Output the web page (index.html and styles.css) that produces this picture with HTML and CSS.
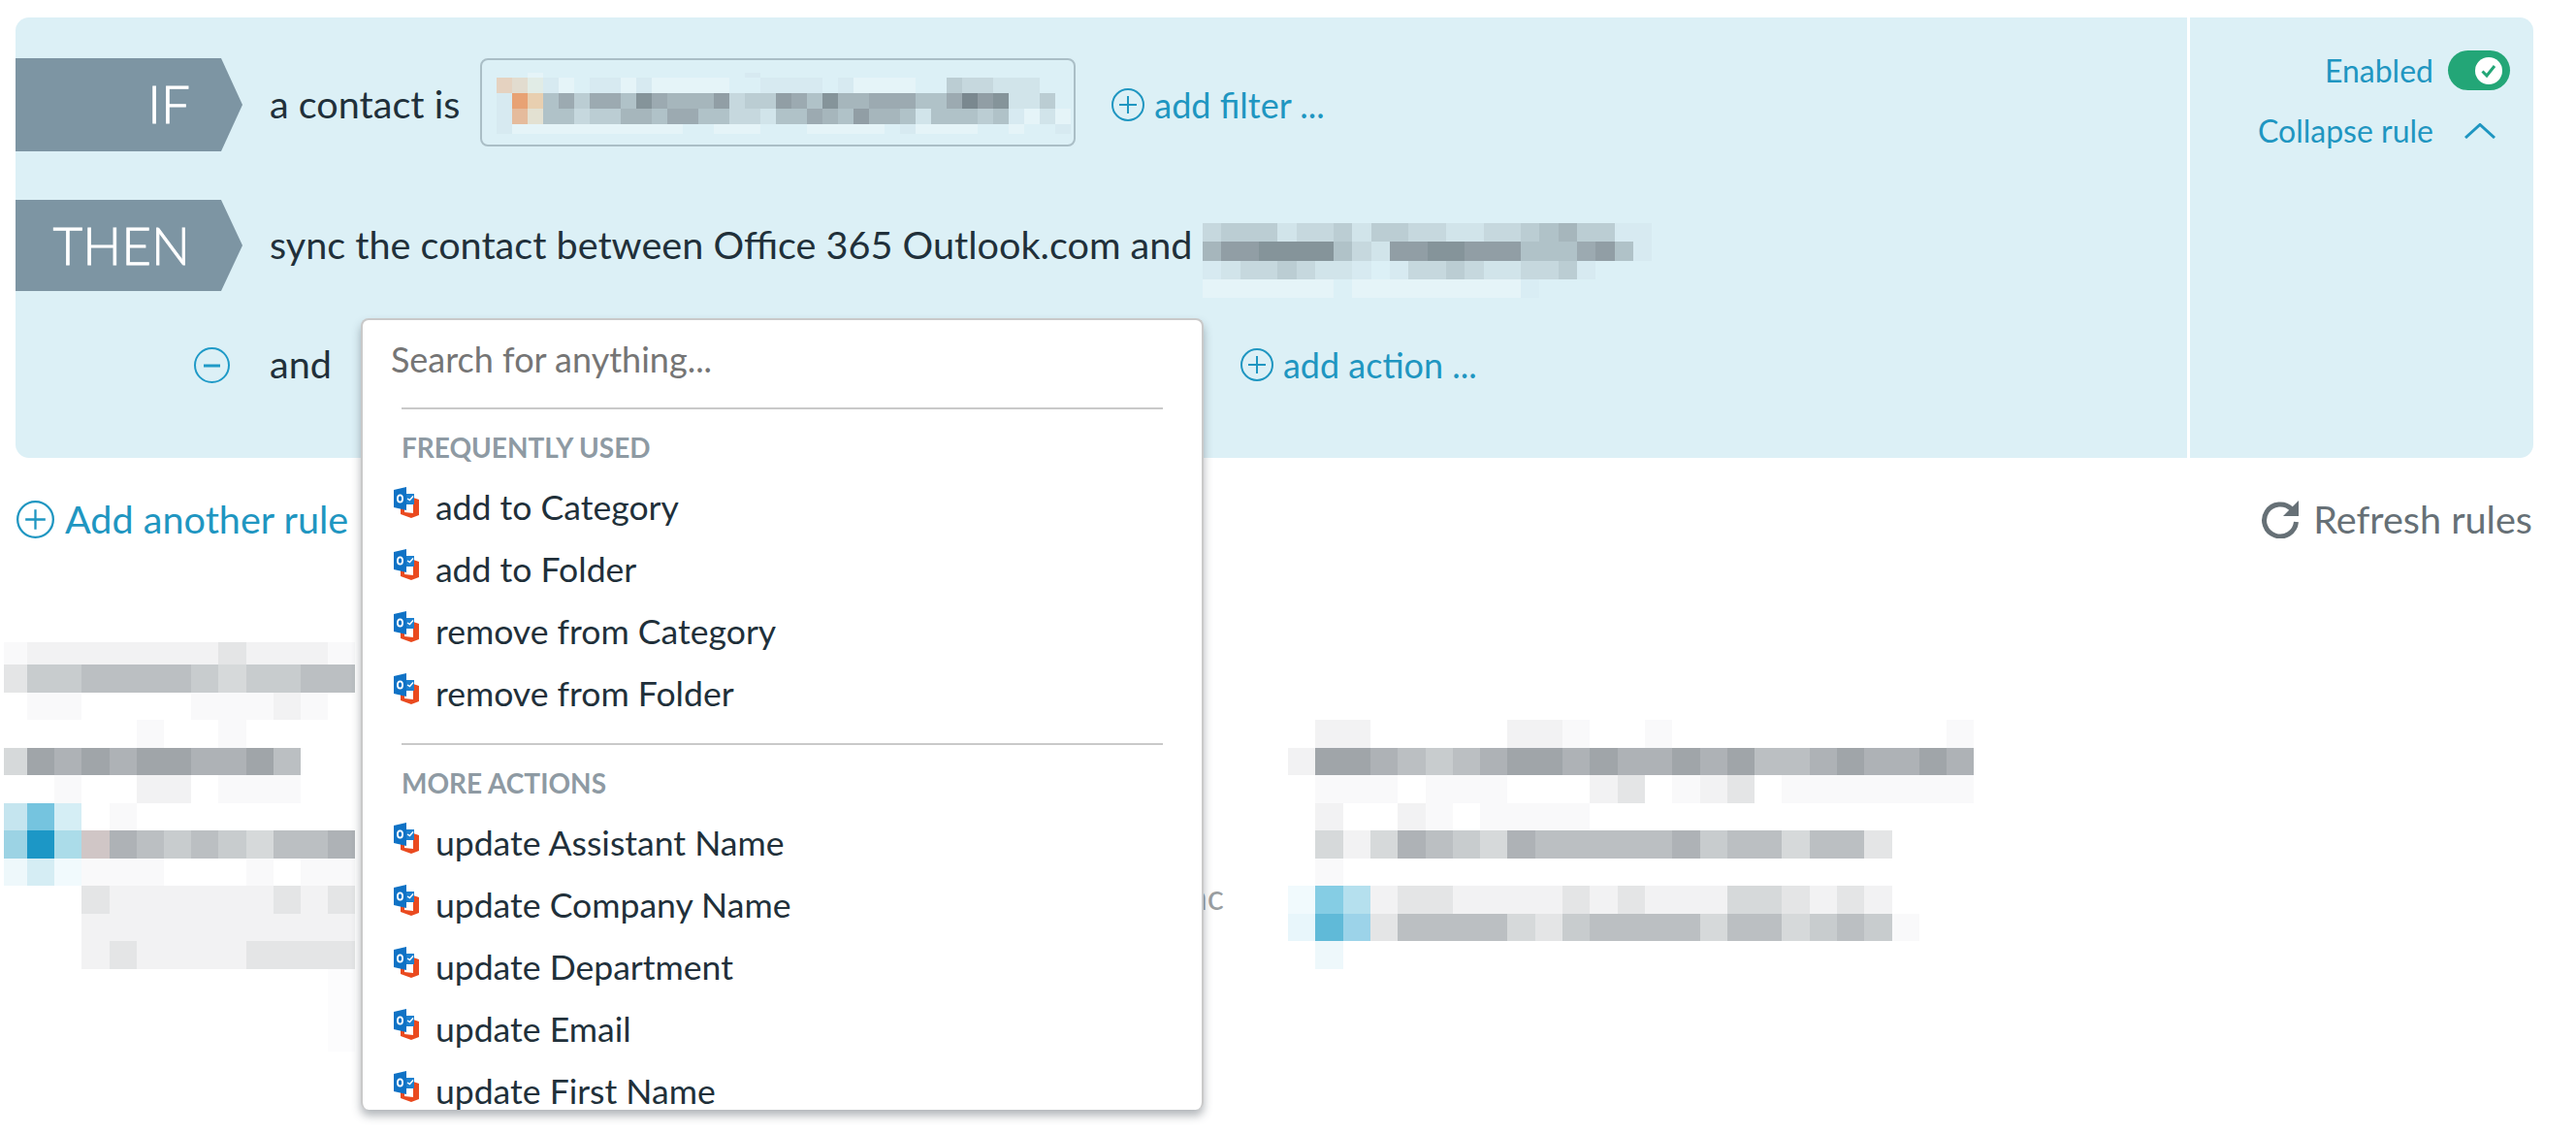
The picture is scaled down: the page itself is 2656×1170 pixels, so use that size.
FILE: index.html
```html
<!DOCTYPE html>
<html lang="en">
<head>
<meta charset="utf-8">
<title>Rules</title>
<link rel="stylesheet" href="styles.css">
</head>
<body>
<svg class="defs" width="0" height="0" aria-hidden="true">
  <symbol id="outlook" viewBox="0 0 26 32">
    <path d="M7 15 20 11 26 13V29L18 32 7 28Z" fill="#ea4a1f"/>
    <path d="M11 18 20 16V27L11 26Z" fill="#fff"/>
    <path d="M12 7H21V18H12Z" fill="#1d80cf"/>
    <path d="M14 12 16.5 13.5 20 9.5" fill="none" stroke="#fff" stroke-width="1.4"/>
    <path d="M0 3 13 0V24L0 21Z" fill="#0f72c5"/>
    <ellipse cx="6.5" cy="12" rx="2.6" ry="3.6" fill="none" stroke="#fff" stroke-width="1.8"/>
  </symbol>
  <symbol id="plus" viewBox="0 0 34 34">
    <circle cx="17" cy="17" r="16" fill="none" stroke="currentColor" stroke-width="2"/>
    <path d="M8 17H26M17 8V26" fill="none" stroke="currentColor" stroke-width="2"/>
  </symbol>
</svg>

<div class="page">
  <section class="panel">
    <div class="rule-main">
      <div class="rule-row rule-if">
        <div class="tag">IF</div>
        <span class="rule-text">a contact is</span>
        <div class="filter-box">
          <div class="mosaic" data-w="16" data-h="16" data-fh="5" data-lh="10" data-rows="..w.............-.....................|ABC-w.--w-wwwww..----.-wwww..322111..|-OT463664865557233764855666446978113.|-PQ442335546644221446547554144434-w1w|-wwwwwwwwwww..www...wwwww.-wwww..w..-"></div>
        </div>
        <a class="link add-filter"><svg class="ico-34"><use href="#plus"/></svg>add filter ...</a>
      </div>
      <div class="rule-row rule-then">
        <div class="tag tag-then">THEN</div>
        <span class="rule-text">sync the contact between Office 365 Outlook.com and</span>
        <div class="mosaic sync-target" data-w="19.3" data-h="19.3" data-rows="2333122313322112234533--|57788884217788777444674-|-1223211-.-223211223-...|wwwwwww.wwwwwwwww,......"></div>
      </div>
      <div class="rule-row rule-and">
        <svg class="minus" viewBox="0 0 37 37"><circle cx="18.5" cy="18.5" r="17.5" fill="none" stroke="#1f9ac7" stroke-width="2"/><path d="M10 19H27" stroke="#1f9ac7" stroke-width="3"/></svg>
        <span class="rule-text">and</span>
        <div class="select-slot">
          <div class="popup">
            <div class="search">Search for anything...</div>
            <div class="sep"></div>
            <div class="group-label">FREQUENTLY USED</div>
            <ul class="items">
              <li><svg class="app"><use href="#outlook"/></svg>add to Category</li>
              <li><svg class="app"><use href="#outlook"/></svg>add to Folder</li>
              <li><svg class="app"><use href="#outlook"/></svg>remove from Category</li>
              <li><svg class="app"><use href="#outlook"/></svg>remove from Folder</li>
            </ul>
            <div class="sep sep-2"></div>
            <div class="group-label">MORE ACTIONS</div>
            <ul class="items">
              <li><svg class="app"><use href="#outlook"/></svg>update Assistant Name</li>
              <li><svg class="app"><use href="#outlook"/></svg>update Company Name</li>
              <li><svg class="app"><use href="#outlook"/></svg>update Department</li>
              <li><svg class="app"><use href="#outlook"/></svg>update Email</li>
              <li><svg class="app"><use href="#outlook"/></svg>update First Name</li>
            </ul>
          </div>
        </div>
        <a class="link add-action"><svg class="ico-34"><use href="#plus"/></svg>add action ...</a>
      </div>
    </div>
    <aside class="rule-side">
      <div class="side-line">
        <span class="link side-link">Enabled</span>
        <span class="toggle"><span class="knob"><svg viewBox="0 0 28 28" width="28" height="28"><path d="M7.5 14.5 12 19 20 9" fill="none" stroke="#23a677" stroke-width="3"/></svg></span></span>
      </div>
      <div class="side-line side-collapse">
        <span class="link side-link">Collapse rule</span>
        <svg class="chev" viewBox="0 0 32 16"><path d="M1 15 16 1.5 31 15" fill="none" stroke="#1f96c1" stroke-width="3"/></svg>
      </div>
    </aside>
  </section>

  <div class="toolbar">
    <a class="link add-rule"><svg class="ico-39"><use href="#plus"/></svg>Add another rule</a>
    <a class="refresh">
      <svg class="ico-refresh" viewBox="0 0 40 40"><path d="M32 10A16.5 16.5 0 1 0 36.5 23" fill="none" stroke="#667076" stroke-width="5"/><path d="M39 1V17H23Z" fill="#667076"/></svg>
      Refresh rules
    </a>
  </div>

  <div class="cards">
    <div class="mosaic" data-w="28.2" data-h="28.5" data-fw="24" data-fh="23" data-rows="-11111112111-|2445555434455|.--....---1-.|.....-..-....|37676776675..|..-..11.---..|DEF.-........|GHJK654543556|LMN---...-.--|...2111111212|...1111111111|...1211112222|............,|............,|............,"></div>
    <span class="cut-text">Inc</span>
    <div class="mosaic card-right" data-w="28.3" data-h="28.5" data-rows=".11.....11-..-..........-|1776545677676676755676676|.---.---...12.-12.-------|.1..1-.----..............|.313654365555564553552...|.-.......................|NRS122111121211133212 1...|XUV255553245555355345 4-..|.L......................."></div>
  </div>
</div>
<script src="mosaic.js"></script>
</body>
</html>
```

FILE: styles.css
```css
* { box-sizing: border-box; }
html, body { margin: 0; padding: 0; background: #fff; }
body { font-family: Lato, "Open Sans", sans-serif; color: #21303a; overflow: hidden; height: 1170px; }
.defs { position: absolute; }
ul { list-style: none; margin: 0; padding: 0; }
.page { padding-top: 18px; }

.panel {
  display: flex;
  height: 454px;
  margin: 0 44px 0 16px;
  background: #dcf0f6;
  border-radius: 14px;
}
.rule-main { flex: 1; padding-top: 42px; }
.rule-row { display: flex; align-items: center; }
.rule-if { height: 96px; }
.rule-then { height: 94px; margin-top: 50px; }
.rule-and { height: 60px; margin-top: 46px; }

.tag {
  width: 234px;
  height: 100%;
  margin-right: 28px;
  padding-right: 54px;
  background: #7d95a3;
  color: #fff;
  font-size: 53px;
  font-weight: 300;
  line-height: 94px;
  text-align: right;
  -webkit-text-stroke: .8px #fff;
  clip-path: polygon(0 0, 212px 0, 100% 50%, 212px 100%, 0 100%);
}
.rule-text { margin-top: -3px; font-size: 39.6px; white-space: nowrap; }
.filter-box {
  width: 614px;
  height: 91px;
  margin: -5px 0 0 21px;
  padding: 13px 0 0 15px;
  border: 2px solid #aabec6;
  border-radius: 8px;
}
.link { color: #1f96c1; white-space: nowrap; }
.ico-34 { width: 34px; height: 34px; margin-right: 10px; flex: none; }
.add-filter, .add-action { display: flex; align-items: center; font-size: 36px; }
.add-filter { margin-left: 37px; }
.add-action { margin-left: 38px; }
.sync-target { margin: 24px 0 0 10px; align-self: flex-start; }

.minus { width: 37px; height: 37px; margin: 0 41px 0 184px; flex: none; }
.select-slot { position: relative; width: 869px; height: 60px; margin-left: 30px; }
.popup {
  position: absolute;
  top: -18px;
  left: 0;
  width: 100%;
  height: 816px;
  overflow: hidden;
  padding: 0 40px 0 40px;
  background: #fff;
  border: 2px solid #c9c9c9;
  border-bottom: 0;
  border-radius: 8px;
  box-shadow: 0 6px 10px rgba(60, 70, 80, .4);
}
.search { height: 90px; margin-left: -11px; padding-top: 18px; font-size: 36px; line-height: 44px; color: #757575; }
.sep { height: 2px; background: #c9c9c9; }
.sep-2 { margin-top: 20px; }
.group-label { margin-top: 22px; font-size: 28px; font-weight: 700; line-height: 34px; color: #8e9aa3; }
.items { margin: 12px 0 0 -8px; }
.items li { display: flex; align-items: center; height: 64px; font-size: 35.6px; white-space: nowrap; }
.app { width: 26px; height: 32px; margin: -8px 17px 0 0; flex: none; }

.rule-side { width: 357px; border-left: 3px solid #fff; padding: 34px 24px 0 0; }
.side-line { display: flex; align-items: center; justify-content: flex-end; height: 41px; }
.side-link { font-size: 32px; }
.toggle { display: flex; align-items: center; justify-content: flex-end; width: 64px; height: 41px; margin-left: 15px; padding-right: 8px; background: #23a677; border-radius: 21px; }
.knob { width: 28px; height: 28px; background: #fff; border-radius: 50%; }
.knob svg { display: block; }
.side-collapse { margin-top: 21px; padding-right: 15px; }
.chev { width: 32px; height: 16px; margin-left: 32px; }

.toolbar { display: flex; justify-content: space-between; align-items: center; height: 38px; margin: 43px 45px 0 17px; }
.add-rule { display: flex; align-items: center; font-size: 39.6px; }
.ico-39 { width: 39px; height: 39px; margin: 2px 11px 0 0; }
.refresh { display: flex; align-items: center; font-size: 39.6px; color: #667076; white-space: nowrap; }
.ico-refresh { width: 40px; height: 40px; margin: 2px 14px 0 0; }

.cards { display: flex; align-items: flex-start; margin-top: 109px; padding-left: 4px; }
.mosaic { flex: none; }
.mosaic svg { display: block; }
.cut-text { width: 895px; margin-top: 242px; font-size: 36px; line-height: 40px; text-align: right; color: #9a9ea1; flex: none; }
.card-right { margin: 80px 0 0 66px; }
```

FILE: mosaic.js
```js
// Paints the pixelated (redacted) blocks from their row data.
var NS = 'http://www.w3.org/2000/svg';
var SOLID = {
  O: '#e8a274', T: '#e8cfb0', A: '#e5d2c0', B: '#e2dccf', C: '#e1ece6', P: '#e5bb9c', Q: '#e3e1d2',
  D: '#c5e5ef', E: '#75c4df', F: '#d5eef5', G: '#9cd3e4', H: '#1c97c6', J: '#abdce9', K: '#d0c6c6',
  L: '#eef8fb', M: '#d5edf4', N: '#f1fafd', R: '#85cde4', S: '#b5e0ee', U: '#60bad8', V: '#9cd3e9', X: '#e8f6fb',
  w: 'rgba(255,255,255,.27)', ',': 'rgba(85,95,102,.015)', '-': 'rgba(85,95,102,.035)'
};
function fill(ch) {
  if (SOLID[ch]) return SOLID[ch];
  if (ch >= '0' && ch <= '9') return 'rgba(85,95,102,' + (ch * 0.08).toFixed(2) + ')';
  return null;
}
document.querySelectorAll('.mosaic').forEach(function (el) {
  var d = el.dataset, cw = +d.w, ch = +d.h, fw = +(d.fw || cw), fh = +(d.fh || ch), lh = +(d.lh || ch);
  var rows = d.rows.split('|').map(function (r) { return r.replace(/ /g, ''); });
  var svg = document.createElementNS(NS, 'svg');
  svg.setAttribute('shape-rendering', 'crispEdges');
  var y = 0, maxX = 0;
  rows.forEach(function (row, ri) {
    var h = ri === 0 ? fh : ri === rows.length - 1 ? lh : ch, x = 0;
    row.split('').forEach(function (c, ci) {
      var w = ci === 0 ? fw : cw, f = fill(c);
      if (f) {
        var r = document.createElementNS(NS, 'rect');
        r.setAttribute('x', Math.round(x));
        r.setAttribute('y', Math.round(y));
        r.setAttribute('width', Math.round(x + w) - Math.round(x));
        r.setAttribute('height', Math.round(y + h) - Math.round(y));
        r.setAttribute('fill', f);
        svg.appendChild(r);
      }
      x += w;
    });
    maxX = Math.max(maxX, x);
    y += h;
  });
  svg.setAttribute('width', Math.ceil(maxX));
  svg.setAttribute('height', Math.ceil(y));
  el.appendChild(svg);
});
```
